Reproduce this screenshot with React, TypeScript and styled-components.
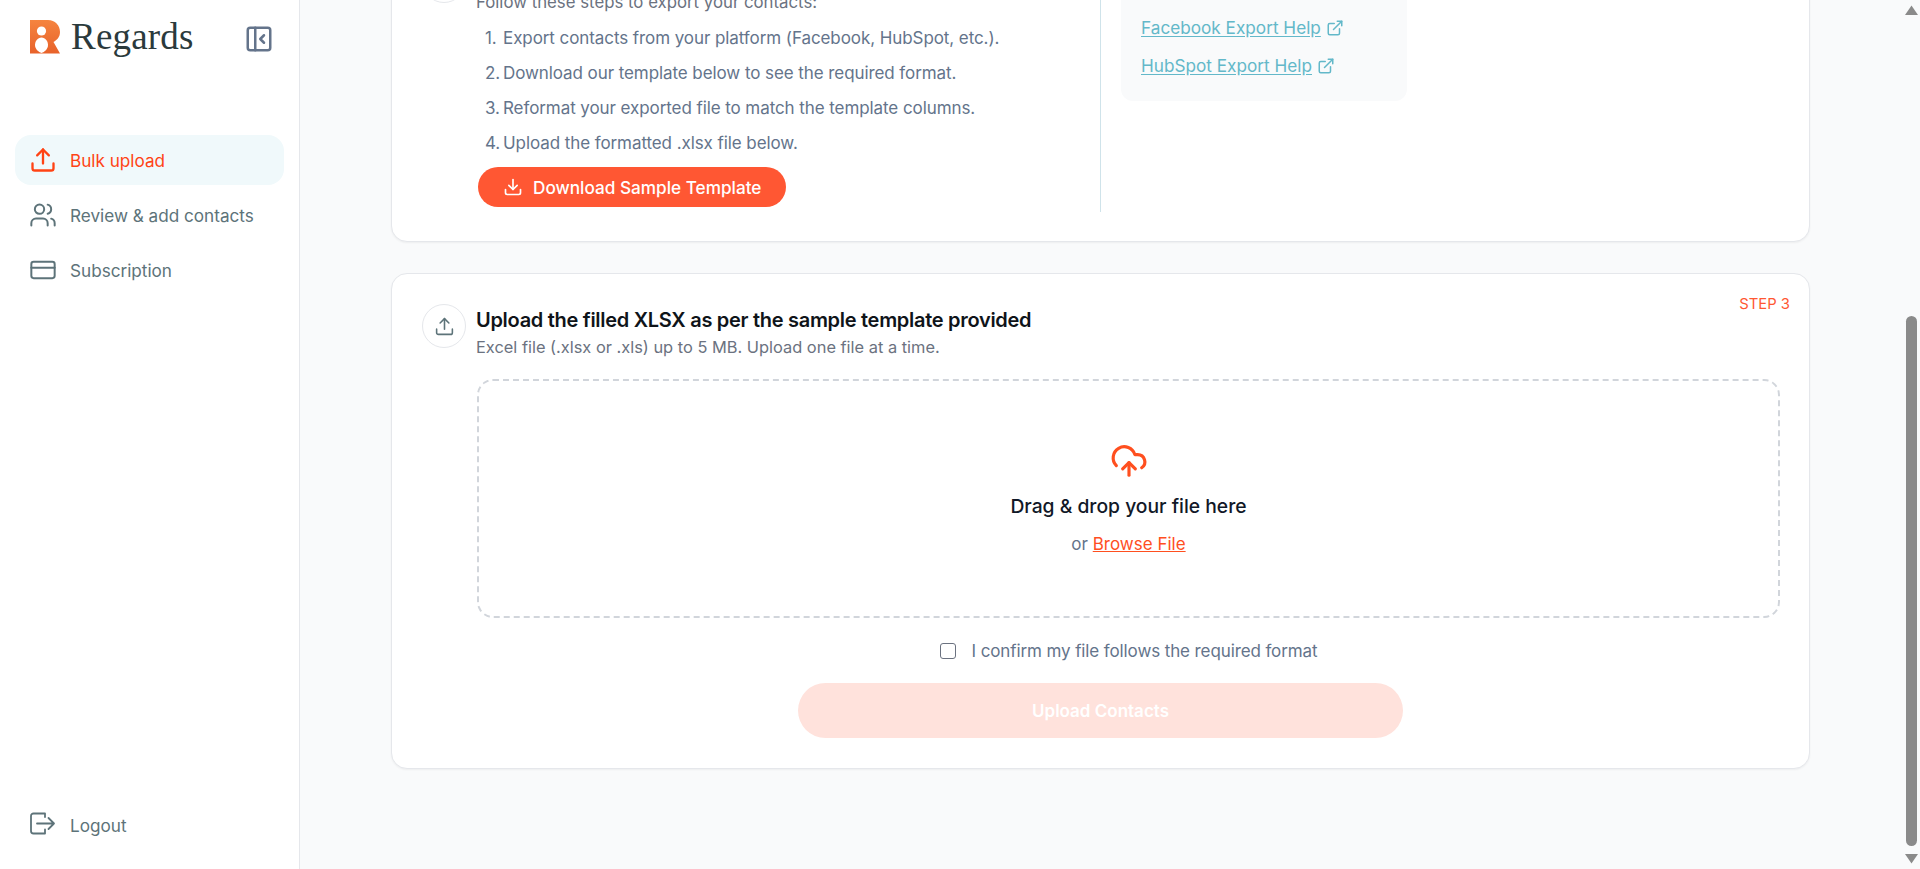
import React from "react";
import styled, { createGlobalStyle } from "styled-components";
import { Upload, Users, CreditCard, PanelLeftClose, Download, ExternalLink, CloudUpload } from "lucide-react";

const Global = createGlobalStyle`
  html, body { margin: 0; padding: 0; height: 100%; overflow: hidden; }
  body { font-family: Inter, "Liberation Sans", sans-serif; background: #f9fafb; }
  * { box-sizing: border-box; }
`;

const Page = styled.div`
  display: flex;
  height: 869px;
  overflow: hidden;
`;

const Sidebar = styled.aside`
  width: 300px;
  flex: none;
  background: #fff;
  border-right: 1px solid #e5e7eb;
  display: flex;
  flex-direction: column;
  padding: 20px 15px 19px;
`;

const Brand = styled.div`
  display: flex;
  align-items: center;
  height: 34px;
  padding-left: 15px;
  margin-bottom: 81px;
`;

const BrandName = styled.span`
  font-family: "Liberation Serif", serif;
  font-size: 37px;
  letter-spacing: 0.2px;
  line-height: 34px;
  color: #2b3a3c;
  margin-left: 11px;
`;

const Collapse = styled.span`
  display: flex;
  color: #64748b;
  margin-left: auto;
  margin-right: 10px;
  margin-top: 4px;
`;

const Nav = styled.nav`
  display: flex;
  flex-direction: column;
  gap: 5px;
  flex: 1;
`;

const NavItem = styled.a<{ $active?: boolean }>`
  display: flex;
  align-items: center;
  gap: 13px;
  height: 50px;
  padding-left: 14px;
  border-radius: 16px;
  font-size: 17.15px;
  line-height: 22px;
  font-weight: 400;
  color: ${(p) => (p.$active ? "#ff4314" : "#5d7379")};
  background: ${(p) => (p.$active ? "#f0f9fb" : "transparent")};
`;

const NavLabel = styled.span`
  padding-top: 1px;
`;

const Main = styled.main`
  flex: 1;
  min-width: 0;
  overflow: hidden;
  padding: 0 93px 0 91px;
  display: flex;
  flex-direction: column;
  gap: 31px;
`;

const Card = styled.section<{ $clipped?: boolean }>`
  flex: none;
  background: #fff;
  border: 1px solid #e5e7eb;
  border-radius: 16px;
  box-shadow: 0 1px 2px rgba(0, 0, 0, 0.05);
  padding: 30px 29px ${(p) => (p.$clipped ? "29px" : "30px")} 30px;
  margin-top: ${(p) => (p.$clipped ? "-72px" : "0")};
`;

const HeaderRow = styled.div`
  display: flex;
  align-items: flex-start;
  gap: 10px;
`;

const IconCircle = styled.span`
  width: 44px;
  height: 44px;
  flex: none;
  border-radius: 50%;
  border: 1px solid #e5e7eb;
  display: flex;
  align-items: center;
  justify-content: center;
  color: #5d7379;
`;

const HeaderText = styled.div`
  flex: 1;
  padding-top: 3px;
`;

const Title = styled.h2`
  margin: 0;
  font-size: 20px;
  line-height: 26px;
  font-weight: 600;
  letter-spacing: -0.29px;
  color: #0f1419;
`;

const Subtitle = styled.p<{ $large?: boolean }>`
  margin: 2px 0 0;
  font-size: ${(p) => (p.$large ? "16.8px" : "16.4px")};
  line-height: 24px;
  color: #6b7280;
`;

const StepLabel = styled.span`
  font-size: 14.8px;
  line-height: 20px;
  color: #ff5733;
  margin: -10px -10px 0 0;
`;

const Columns = styled.div`
  display: flex;
  align-items: flex-start;
`;

const LeftColumn = styled.div`
  width: 679px;
  flex: none;
  align-self: stretch;
  border-right: 1px solid #cfe3ea;
  padding-bottom: 5px;
`;

const StepList = styled.ol`
  margin: 6px 0 0;
  padding: 0 0 0 57px;
  list-style: none;
`;

const StepItem = styled.li`
  display: flex;
  height: 35px;
  align-items: center;
  font-size: 17px;
  letter-spacing: -0.08px;
  color: #64748b;
  padding: 1px 0 0 7px;
  margin-left: -1px;
`;

const StepNumber = styled.span`
  width: 18px;
  flex: none;
`;

const DownloadButton = styled.button`
  display: flex;
  align-items: center;
  gap: 10px;
  margin: 7px 0 0 56px;
  height: 40px;
  width: 308px;
  border: 0;
  border-radius: 20px;
  padding: 0 0 0 25px;
  background: #ff5733;
  color: #fff;
  font: 500 17.2px Inter, sans-serif;
`;

const HelpBox = styled.div`
  width: 286px;
  margin: 0 0 0 20px;
  padding: 57px 20px 23px;
  background: #f9fafb;
  border-radius: 12px;
  display: flex;
  flex-direction: column;
  gap: 14px;
`;

const HelpLink = styled.a`
  display: flex;
  align-items: center;
  gap: 5px;
  font-size: 17.2px;
  line-height: 24px;
  color: #63b8c9;
  text-decoration: underline;
  text-underline-offset: 2px;
`;

const DropZone = styled.div`
  margin: 20px 0 0 55px;
  height: 239px;
  border: 2px dashed #d1d5db;
  border-radius: 16px;
  display: flex;
  flex-direction: column;
  align-items: center;
  padding-top: 61px;
  color: #ff4f1f;
`;

const DropTitle = styled.div`
  margin-top: 12px;
  font-size: 19.3px;
  line-height: 28px;
  font-weight: 500;
  color: #111827;
`;

const DropHint = styled.div`
  margin-top: 12px;
  font-size: 17px;
  line-height: 24px;
  color: #64748b;
`;

const BrowseLink = styled.a`
  color: #ff4f1f;
  text-decoration: underline;
`;

const ConfirmRow = styled.label`
  margin: 21px 0 0 55px;
  display: flex;
  justify-content: center;
  align-items: center;
  gap: 16px;
  height: 24px;
  font-size: 17px;
  letter-spacing: -0.11px;
  color: #64748b;
`;

const CheckBox = styled.span`
  width: 16px;
  height: 16px;
  border: 1.5px solid #6b7280;
  border-radius: 3px;
  background: #fff;
`;

const UploadButton = styled.button`
  display: block;
  margin: 20px 0 0 376px;
  width: 605px;
  height: 55px;
  border: 0;
  border-radius: 28px;
  background: #ffe2dc;
  color: #fff;
  font: 600 17px Inter, sans-serif;
`;

const ScrollRail = styled.div`
  width: 17px;
  flex: none;
  display: flex;
  flex-direction: column;
  align-items: center;
  padding: 5px 0;
  background: #f9fafb;
`;

const ScrollThumb = styled.div`
  width: 11px;
  height: 530px;
  border-radius: 6px;
  background: #8a8a8a;
  margin: 301px 0 8px;
`;

const Arrow = ({ up }: { up?: boolean }) => (
  <svg width="13" height="10" viewBox="0 0 13 10">
    <path d={up ? "M6.5 0.5 L13 10 H0 Z" : "M0 0 H13 L6.5 9.5 Z"} fill="#8a8a8a" />
  </svg>
);

const Logo = () => (
  <svg width="30" height="34" viewBox="0 0 30 34">
    <defs>
      <linearGradient id="lg" x1="0" y1="0" x2="0" y2="1">
        <stop offset="0" stopColor="#f5843f" />
        <stop offset="1" stopColor="#e8622a" />
      </linearGradient>
    </defs>
    <path d="M0 0H18C25 0 30 5 30 12C30 17 27 20 23.5 22L30 33.5H0Z" fill="url(#lg)" />
    <circle cx="11.5" cy="11" r="4.6" fill="#fff" />
    <path d="M11.5 17.5C15.5 17.5 18 21.5 18 25C18 29 14.5 32 11.5 33C8.5 32 5 29 5 25C5 21.5 7.5 17.5 11.5 17.5Z" fill="#fff" />
  </svg>
);

const LogoutIcon = () => (
  <svg width="28" height="28" viewBox="0 0 28 28" fill="none" stroke="currentColor" strokeWidth="1.8" strokeLinecap="round" strokeLinejoin="round">
    <path d="M16 6V2.5H4.5A2.5 2.5 0 0 0 2 5V20A2.5 2.5 0 0 0 4.5 22.5H16V18.5" />
    <path d="M8 12.5H25M19.5 7L25 12.5L19.5 18" />
  </svg>
);

export default function App() {
  const steps = [
    "Export contacts from your platform (Facebook, HubSpot, etc.).",
    "Download our template below to see the required format.",
    "Reformat your exported file to match the template columns.",
    "Upload the formatted .xlsx file below.",
  ];
  return (
    <Page>
      <Global />
      <Sidebar>
        <Brand>
          <Logo />
          <BrandName>Regards</BrandName>
          <Collapse>
            <PanelLeftClose size={30} strokeWidth={2} />
          </Collapse>
        </Brand>
        <Nav>
          <NavItem $active>
            <Upload size={28} strokeWidth={2} />
            <NavLabel>Bulk upload</NavLabel>
          </NavItem>
          <NavItem>
            <Users size={28} strokeWidth={1.7} />
            <NavLabel>Review &amp; add contacts</NavLabel>
          </NavItem>
          <NavItem>
            <CreditCard size={28} strokeWidth={1.7} />
            <NavLabel>Subscription</NavLabel>
          </NavItem>
        </Nav>
        <NavItem>
          <LogoutIcon />
          <NavLabel>Logout</NavLabel>
        </NavItem>
      </Sidebar>
      <Main>
        <Card $clipped>
          <Columns>
            <LeftColumn>
              <HeaderRow>
                <IconCircle>
                  <Download size={21} strokeWidth={1.8} />
                </IconCircle>
                <HeaderText>
                  <Title>Export your contacts</Title>
                  <Subtitle $large>Follow these steps to export your contacts:</Subtitle>
                </HeaderText>
              </HeaderRow>
              <StepList>
                {steps.map((s, i) => (
                  <StepItem key={s}>
                    <StepNumber>{i + 1}.</StepNumber>
                    <span>{s}</span>
                  </StepItem>
                ))}
              </StepList>
              <DownloadButton>
                <Download size={20} />
                Download Sample Template
              </DownloadButton>
            </LeftColumn>
            <HelpBox>
              <HelpLink>
                Facebook Export Help
                <ExternalLink size={18} />
              </HelpLink>
              <HelpLink>
                HubSpot Export Help
                <ExternalLink size={18} />
              </HelpLink>
            </HelpBox>
          </Columns>
        </Card>
        <Card>
          <HeaderRow>
            <IconCircle>
              <Upload size={21} strokeWidth={1.8} />
            </IconCircle>
            <HeaderText>
              <Title>Upload the filled XLSX as per the sample template provided</Title>
              <Subtitle>Excel file (.xlsx or .xls) up to 5 MB. Upload one file at a time.</Subtitle>
            </HeaderText>
            <StepLabel>STEP 3</StepLabel>
          </HeaderRow>
          <DropZone>
            <CloudUpload size={38} strokeWidth={2} />
            <DropTitle>Drag &amp; drop your file here</DropTitle>
            <DropHint>
              or <BrowseLink>Browse File</BrowseLink>
            </DropHint>
          </DropZone>
          <ConfirmRow>
            <CheckBox />
            I confirm my file follows the required format
          </ConfirmRow>
          <UploadButton>Upload Contacts</UploadButton>
        </Card>
      </Main>
      <ScrollRail>
        <Arrow up />
        <ScrollThumb />
        <Arrow />
      </ScrollRail>
    </Page>
  );
}
